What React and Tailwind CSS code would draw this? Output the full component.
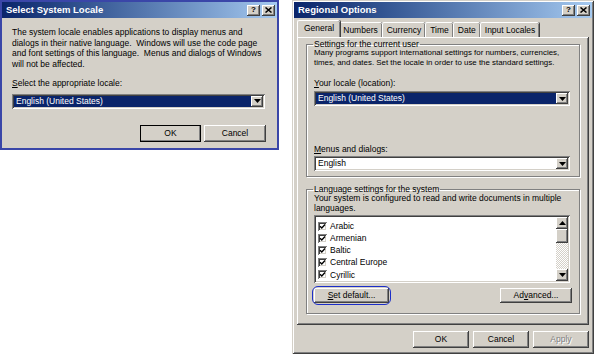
import { Fragment } from 'react';

const raised = 'shadow-[inset_-1px_-1px_#404040,inset_1px_1px_#ffffff,inset_-2px_-2px_#808080]';
const sunken = 'shadow-[inset_1px_1px_#808080,inset_-1px_-1px_#ffffff,inset_2px_2px_#404040,inset_-2px_-2px_#d4d0c8]';
const windowEdge = 'shadow-[inset_1px_1px_#d4d0c8,inset_-1px_-1px_#404040,inset_2px_2px_#ffffff,inset_-2px_-2px_#808080]';

function Arrow() {
  return (
    <svg width="7" height="4" viewBox="0 0 7 4">
      <path d="M0 0h7L3.5 4z" fill="#000" />
    </svg>
  );
}

function TitleBar({ title }) {
  return (
    <div className="flex h-[16px] items-center justify-between bg-gradient-to-r from-[#0a246a] to-[#a6caf0] pl-[4px] pr-[2px]">
      <span className="text-[9.5px] font-bold leading-none text-white">{title}</span>
      <div className="flex gap-[2px]">
        <div className={`flex h-[11px] w-[13px] items-center justify-center bg-[#d4d0c8] text-[8px] font-bold leading-none text-black ${raised}`}>?</div>
        <div className={`flex h-[11px] w-[13px] items-center justify-center bg-[#d4d0c8] ${raised}`}>
          <svg width="7" height="6" viewBox="0 0 7 6">
            <path d="M0.5 0.5l6 5M6.5 0.5l-6 5" stroke="#000" strokeWidth="1.5" />
          </svg>
        </div>
      </div>
    </div>
  );
}

function Combo({ value, selected, className = '' }) {
  return (
    <div className={`flex h-[15px] bg-white p-[2px] ${sunken} ${className}`}>
      <div className={`flex flex-1 items-center pl-[2px] leading-none ${selected ? 'bg-[#0a246a] text-white' : 'text-black'}`}>{value}</div>
      <div className={`flex w-[12px] items-center justify-center bg-[#d4d0c8] ${raised}`}>
        <Arrow />
      </div>
    </div>
  );
}

function Button({ children, className = '', isDefault, disabled }) {
  return (
    <div
      className={`flex items-center justify-center bg-[#d4d0c8] leading-none ${raised} ${isDefault ? 'outline outline-1 outline-black -outline-offset-1' : ''} ${disabled ? 'text-[#808080] [text-shadow:1px_1px_#ffffff]' : 'text-black'} ${className}`}
    >
      {children}
    </div>
  );
}

function Check() {
  return (
    <div className={`flex h-[9px] w-[9px] items-center justify-center bg-white ${sunken}`}>
      <svg width="7" height="7" viewBox="0 0 7 7">
        <path d="M1 3.2l1.8 1.8L6 1.6" stroke="#000" strokeWidth="1.4" fill="none" />
      </svg>
    </div>
  );
}

const languages = ['Arabic', 'Armenian', 'Baltic', 'Central Europe', 'Cyrillic'];
const tabs = ['General', 'Numbers', 'Currency', 'Time', 'Date', 'Input Locales'];

export default function App() {
  return (
    <div className="flex h-[354px] w-[594px] items-start bg-white font-['Liberation_Sans',Arial,sans-serif] text-[8.5px] text-black">
      {/* Select System Locale */}
      <div className="flex h-[150px] w-[279px] flex-col border-2 border-[#3a46a8] bg-[#d4d0c8]">
        <TitleBar title="Select System Locale" />
        <div className="px-[10px] pt-[9px] leading-[10.5px]">
          <p className="whitespace-nowrap">
            The system locale enables applications to display menus and
            <br />
            dialogs in their native language.&nbsp; Windows will use the code page
            <br />
            and font settings of this language.&nbsp; Menus and dialogs of Windows
            <br />
            will not be affected.
          </p>
          <p className="mt-[9px]">
            <u>S</u>elect the appropriate locale:
          </p>
          <Combo className="mt-[5px] w-[253px]" value="English (United States)" selected />
          <div className="mt-[16px] flex justify-end gap-[3px] pr-[1px]">
            <Button isDefault className="h-[17px] w-[61px]">OK</Button>
            <Button className="h-[17px] w-[62px]">Cancel</Button>
          </div>
        </div>
      </div>

      {/* Regional Options */}
      <div className={`ml-[13px] flex h-[354px] w-[302px] flex-col bg-[#d4d0c8] p-[2px] ${windowEdge}`}>
        <TitleBar title="Regional Options" />
        <div className="px-[3px] pt-[2px]">
          <div className="flex h-[17px] items-end pl-[2px]">
            {tabs.map((t, i) => (
              <div
                key={t}
                className={
                  i === 0
                    ? 'relative z-10 -mx-[2px] flex h-[17px] items-center rounded-t-[2px] border-l border-t border-white bg-[#d4d0c8] px-[6px] pb-[1px] shadow-[inset_-1px_0_#808080,1px_0_#404040]'
                    : 'flex h-[15px] items-center rounded-t-[2px] border-l border-t border-white px-[4px] shadow-[inset_-1px_0_#808080,1px_0_#404040]'
                }
              >
                {t}
              </div>
            ))}
          </div>
          <div className={`h-[288px] px-[9px] pt-[2px] ${raised}`}>
            <fieldset className="h-[138px] border border-[#808080] px-[7px] shadow-[1px_1px_#ffffff,inset_1px_1px_#ffffff]">
              <legend className="ml-[-1px] px-[1px] leading-[10px]">Settings for the current user</legend>
              <p className="mt-[-1px] whitespace-nowrap text-[7.9px] leading-[9.5px]">
                Many programs support international settings for numbers, currencies,
                <br />
                times, and dates. Set the locale in order to use the standard settings.
              </p>
              <p className="mt-[11px] leading-[10px]">
                <u>Y</u>our locale (location):
              </p>
              <Combo className="mt-[3px] w-[256px]" value="English (United States)" selected />
              <p className="mt-[38px] leading-[10px]">
                <u>M</u>enus and dialogs:
              </p>
              <Combo className="mt-[2px] w-[256px]" value="English" />
            </fieldset>
            <fieldset className="mt-[7px] h-[130px] border border-[#808080] px-[7px] shadow-[1px_1px_#ffffff,inset_1px_1px_#ffffff]">
              <legend className="ml-[-1px] px-[1px] leading-[10px]">Language settings for the system</legend>
              <p className="mt-[-1px] whitespace-nowrap leading-[10px]">
                Your system is configured to read and write documents in multiple
                <br />
                languages.
              </p>
              <div className={`mt-[2px] flex h-[68px] w-[256px] bg-white p-[2px] ${sunken}`}>
                <div className="flex flex-1 flex-col pl-[2px] pt-[3px]">
                  {languages.map((l) => (
                    <div key={l} className="flex h-[12.5px] items-center gap-[3px]">
                      <Check />
                      <span className="leading-none">{l}</span>
                    </div>
                  ))}
                </div>
                <div className="flex w-[12px] flex-col bg-[repeating-conic-gradient(#ffffff_0_25%,#d4d0c8_0_50%)] bg-[length:2px_2px]">
                  <div className={`flex h-[12px] items-center justify-center bg-[#d4d0c8] ${raised}`}>
                    <svg width="7" height="4" viewBox="0 0 7 4">
                      <path d="M0 4h7L3.5 0z" fill="#000" />
                    </svg>
                  </div>
                  <div className={`h-[14px] bg-[#d4d0c8] ${raised}`} />
                  <div className="flex-1" />
                  <div className={`flex h-[12px] items-center justify-center bg-[#d4d0c8] ${raised}`}>
                    <Arrow />
                  </div>
                </div>
              </div>
              <div className="mt-[5px] flex items-center justify-between">
                <div className="relative">
                  <Button className="h-[15px] w-[75px]">
                    <u>S</u>et default...
                  </Button>
                  <div className="absolute inset-[-2px] rounded-[6px] border-[1.5px] border-[#1c2ec8]" />
                </div>
                <Button className="h-[15px] w-[72px]">
                  Ad<u>v</u>anced...
                </Button>
              </div>
            </fieldset>
          </div>
        </div>
        <div className="mt-[6px] flex justify-end gap-[4px] pr-[3px]">
          <Button className="h-[17px] w-[56px]">OK</Button>
          <Button className="h-[17px] w-[56px]">Cancel</Button>
          <Button disabled className="h-[17px] w-[56px]">Apply</Button>
        </div>
      </div>
    </div>
  );
}
